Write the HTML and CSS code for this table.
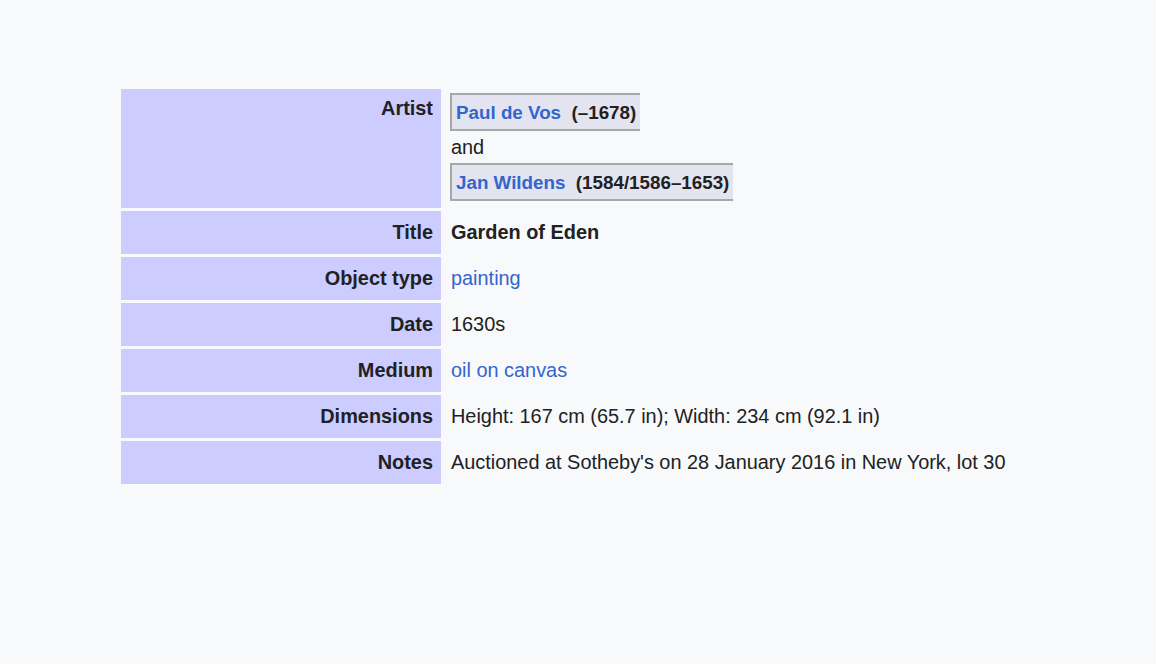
FILE: index.html
```html
<!DOCTYPE html>
<html lang="en">
<head>
    <meta charset="UTF-8">
    <meta name="viewport" content="width=device-width, initial-scale=1.0">
    <title>Garden of Eden</title>
    <link rel="stylesheet" href="styles.css">
</head>
<body>
    <div class="page">
        <table class="artwork">
            <tr>
                <th class="label label-top">Artist</th>
                <td class="value artists">
                    <div class="creator">
                        <a href="#">Paul de Vos</a>&nbsp;&nbsp;<b>(–1678)</b>
                    </div>
                    <div class="joiner">and</div>
                    <div class="creator">
                        <a href="#">Jan Wildens</a>&nbsp;&nbsp;<b>(1584/1586–1653)</b>
                    </div>
                </td>
            </tr>
            <tr>
                <th class="label">Title</th>
                <td class="value"><b>Garden of Eden</b></td>
            </tr>
            <tr>
                <th class="label">Object type</th>
                <td class="value"><a href="#">painting</a></td>
            </tr>
            <tr>
                <th class="label">Date</th>
                <td class="value">1630s</td>
            </tr>
            <tr>
                <th class="label">Medium</th>
                <td class="value"><a href="#">oil on canvas</a></td>
            </tr>
            <tr>
                <th class="label">Dimensions</th>
                <td class="value">Height: 167 cm (65.7 in); Width: 234 cm (92.1 in)</td>
            </tr>
            <tr>
                <th class="label">Notes</th>
                <td class="value">Auctioned at Sotheby's on 28 January 2016 in New York, lot 30</td>
            </tr>
        </table>
    </div>
</body>
</html>
```

FILE: styles.css
```css
* {
    margin: 0;
    padding: 0;
    box-sizing: border-box;
}

body {
    font-family: "Liberation Sans", Arial, sans-serif;
    font-size: 19.9px;
    line-height: 27px;
    color: #202122;
    background-color: #f8f9fa;
}

.page {
    padding: 86px 0 0 118px;
}

.artwork {
    border-collapse: separate;
    border-spacing: 3px;
}

.label {
    width: 320px;
    background-color: #ccccff;
    text-align: right;
    vertical-align: top;
    font-weight: bold;
    padding: 8px 8px 8px 8px;
    white-space: nowrap;
}

.label-top {
    padding-top: 6px;
}

.value {
    vertical-align: top;
    padding: 8px 8px 8px 7px;
    white-space: nowrap;
}

.artists {
    padding: 4px 8px 7px 6px;
}

.creator {
    display: inline-block;
    font-size: 18.8px;
    background-color: #e4e4f0;
    border: 2px solid #a8a8a8;
    border-right: none;
    padding: 3px 4px 2px 4px;
    line-height: 29px;
}

.joiner {
    line-height: 32px;
    padding-left: 1px;
}

a {
    color: #3366cc;
    text-decoration: none;
}

.creator a {
    font-weight: bold;
}
```
